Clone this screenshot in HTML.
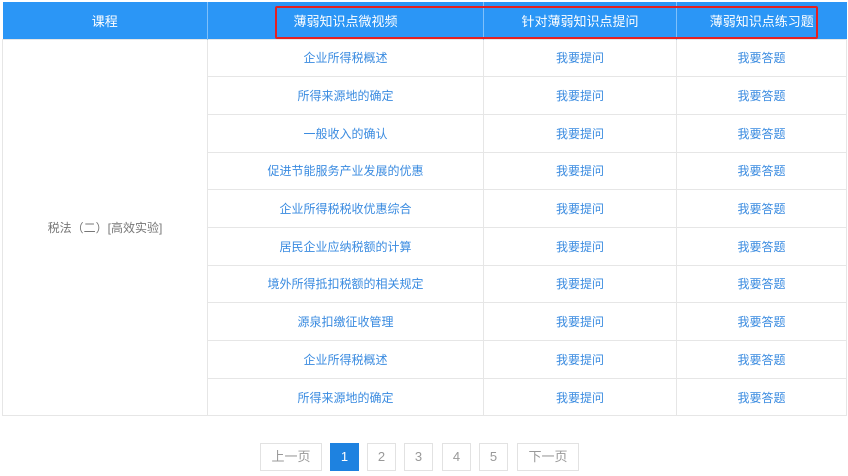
<!DOCTYPE html>
<html><head><meta charset="utf-8"><style>
*{margin:0;padding:0;box-sizing:border-box}
body{width:848px;height:476px;background:#fff;font-family:"Liberation Sans","Noto Sans CJK SC",sans-serif;font-size:12px;position:relative;overflow:hidden}
table{position:absolute;left:2px;top:2px;width:844px;border-collapse:collapse;table-layout:fixed}
th{background:#2b96f6;color:#fff;font-weight:normal;height:37px;font-size:13px;border-right:1px solid #7fc0fa}
th:last-child{border-right:none}
td{height:37.7px;text-align:center;color:#3a8be0;border:1px solid #e6e6e6;font-size:12px}
td.c{color:#777}
.red{position:absolute;left:275px;top:6px;width:543px;height:33px;border:2px solid #e52020;border-radius:2px}
.pg{position:absolute;top:443px;height:28px;border:1px solid #e2e2e2;color:#999;text-align:center;line-height:26px;font-size:13px}
.pg.a{background:#1e82e0;border-color:#1e82e0;color:#fff}
</style></head><body>
<table>
<colgroup><col style="width:205px"><col style="width:276px"><col style="width:193px"><col style="width:170px"></colgroup>
<tr><th>课程</th><th>薄弱知识点微视频</th><th>针对薄弱知识点提问</th><th>薄弱知识点练习题</th></tr>
<tr><td class="c" rowspan="10">税法（二）[高效实验]</td><td>企业所得税概述</td><td>我要提问</td><td>我要答题</td></tr>
<tr><td>所得来源地的确定</td><td>我要提问</td><td>我要答题</td></tr>
<tr><td>一般收入的确认</td><td>我要提问</td><td>我要答题</td></tr>
<tr><td>促进节能服务产业发展的优惠</td><td>我要提问</td><td>我要答题</td></tr>
<tr><td>企业所得税税收优惠综合</td><td>我要提问</td><td>我要答题</td></tr>
<tr><td>居民企业应纳税额的计算</td><td>我要提问</td><td>我要答题</td></tr>
<tr><td>境外所得抵扣税额的相关规定</td><td>我要提问</td><td>我要答题</td></tr>
<tr><td>源泉扣缴征收管理</td><td>我要提问</td><td>我要答题</td></tr>
<tr><td>企业所得税概述</td><td>我要提问</td><td>我要答题</td></tr>
<tr><td>所得来源地的确定</td><td>我要提问</td><td>我要答题</td></tr>
</table>
<div class="red"></div>
<div class="pg" style="left:260px;width:62px">上一页</div>
<div class="pg a" style="left:330px;width:29px">1</div>
<div class="pg" style="left:367px;width:29px">2</div>
<div class="pg" style="left:404px;width:29px">3</div>
<div class="pg" style="left:442px;width:29px">4</div>
<div class="pg" style="left:479px;width:29px">5</div>
<div class="pg" style="left:517px;width:62px">下一页</div>
</body></html>
